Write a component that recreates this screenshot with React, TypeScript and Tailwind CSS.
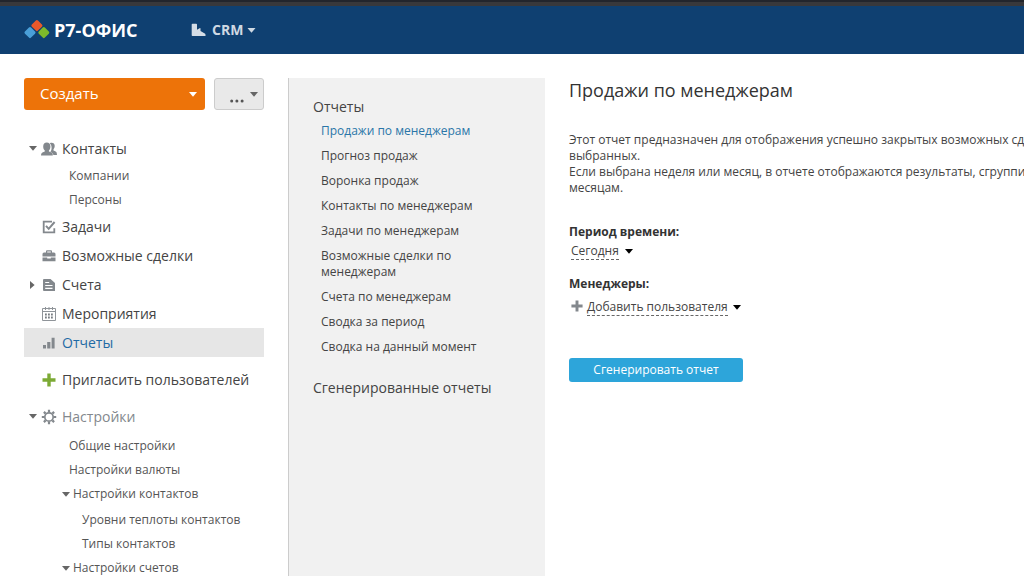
import { useState } from "react";
import type { ReactNode } from "react";

const REPORTS = [
  "Продажи по менеджерам",
  "Прогноз продаж",
  "Воронка продаж",
  "Контакты по менеджерам",
  "Задачи по менеджерам",
  "Возможные сделки по менеджерам",
  "Счета по менеджерам",
  "Сводка за период",
  "Сводка на данный момент",
];

function Caret({ className }: { className?: string }) {
  return (
    <svg viewBox="0 0 8 5" aria-hidden="true" className={className ?? "h-[5px] w-2 fill-[#666]"}>
      <path d="M0 0h8L4 4.8z" />
    </svg>
  );
}

function Logo() {
  return (
    <svg viewBox="0 0 26 20" aria-hidden="true" className="h-5 w-[26px]">
      <rect x="-4.3" y="-4.3" width="8.6" height="8.6" rx="1.5" fill="#4a9fd8" transform="translate(6 12.6) rotate(45)" />
      <rect x="-4.3" y="-4.3" width="8.6" height="8.6" rx="1.5" fill="#7dba2c" transform="translate(19.8 12.6) rotate(45)" />
      <rect x="-4.3" y="-4.3" width="8.6" height="8.6" rx="1.5" fill="#e8582a" transform="translate(12.9 5.600) rotate(45)" />
    </svg>
  );
}

function ContactsIcon() {
  return (
    <svg viewBox="0 0 16 14" aria-hidden="true" className="h-3.5 w-4 fill-[#83888d]">
      <path d="M8.800 1.300c2.600-1.300 4.900.1 4.900 2.500 0 1.700-.5 2.700-1.200 3.400v1.300c1.700.7 2.900 1.100 3.200 2.200l.3 2.300h-3.600c-.3-1.500-1.300-2.400-3-3.100.8-1 1.200-2.500 1.200-4.200 0-1.700-.6-3.300-1.800-4.400z" />
      <path d="M5.800.5c2.200 0 3.600 1.600 3.600 3.900 0 1.900-.6 3.200-1.500 4v1.100c2 .8 3.500 1.200 3.800 2.500l.1 1.500H0l.2-1.500c.3-1.300 1.800-1.700 3.600-2.500V8.400c-1-.8-1.600-2.100-1.600-4C2.200 2.100 3.600.5 5.800.5z" />
    </svg>
  );
}

function TasksIcon() {
  return (
    <svg viewBox="0 0 14 14" aria-hidden="true" className="h-3.5 w-3.5 fill-none stroke-[#83888d]">
      <path d="M10 1.700H1.700v10.600h10.600V8.300" strokeWidth="1.800" />
      <path d="M4 5.800l2.700 3L12.600 2" strokeWidth="2" />
    </svg>
  );
}

function DealsIcon() {
  return (
    <svg viewBox="0 0 14 14" aria-hidden="true" className="h-3.5 w-3.5 fill-[#83888d]">
      <path d="M4 4V2.200Q4 1.200 5 1.200h4q1 0 1 1V4h-1.200V2.400H5.200V4z" />
      <path d="M2 3.500h10q1.500 0 1.500 1.500v2.500h-13V5q0-1.500 1.500-1.500z" />
      <path d="M.5 8.500h4.700v1h3.600v-1h4.700v3.800H.5z" />
    </svg>
  );
}

function InvoicesIcon() {
  return (
    <svg viewBox="0 0 14 14" aria-hidden="true" className="h-3.5 w-3.5">
      <path d="M2 1h6.500L13 5v8H2q-1 0-1-1V2q0-1 1-1z" fill="#83888d" />
      <path d="M3.200 4.500h4M3.200 7.500h7.300M3.200 10.300h7.300" stroke="#fff" strokeWidth="1.200" />
    </svg>
  );
}

function EventsIcon() {
  return (
    <svg viewBox="0 0 16 14" aria-hidden="true" className="h-3.5 w-4">
      <path d="M1.500 1.500h13v12h-13zM1.500 4.500h13" fill="none" stroke="#8f9499" />
      <path d="M4.500 0v3M8 0v3M11.500 0v3" stroke="#8f9499" />
      <path d="M4 7.500h8.500M4 10.500h8.500" stroke="#777c81" strokeWidth="2" strokeDasharray="1.800 1.200" />
    </svg>
  );
}

function ReportsIcon() {
  return (
    <svg viewBox="0 0 14 14" aria-hidden="true" className="h-3.5 w-3.5 fill-[#83888d]">
      <path d="M1 9h3v3.500H1zM5.200 6h3.200v6.500H5.200zM9.600 1.800h3v10.700h-3z" />
    </svg>
  );
}

function PlusIcon({ className }: { className: string }) {
  return (
    <svg viewBox="0 0 14 14" aria-hidden="true" className={className}>
      <path d="M5.300.5h3.400v4.800h4.800v3.400H8.700v4.800H5.300V8.700H.5V5.300h4.800z" />
    </svg>
  );
}

function GearIcon() {
  return (
    <svg viewBox="0 0 16 16" aria-hidden="true" className="h-4 w-4 fill-none stroke-[#83888d]">
      <circle cx="8" cy="8" r="4.200" strokeWidth="1.700" />
      <path
        d="M8 .8v2.400M8 12.800v2.400M.8 8h2.400M12.800 8h2.400M2.900 2.900l1.700 1.700M11.400 11.400l1.700 1.700M2.900 13.100l1.700-1.700M11.400 4.600l1.700-1.700"
        strokeWidth="2.200"
      />
    </svg>
  );
}

type NavItemProps = {
  icon: ReactNode;
  label: string;
  arrow?: "down" | "right";
  active?: boolean;
  muted?: boolean;
};

function NavItem({ icon, label, arrow, active, muted }: NavItemProps) {
  const color = active ? "text-[#1f6aa5]" : muted ? "text-[#83888d]" : "text-[#444]";
  return (
    <a
      href="#"
      aria-current={active ? "page" : undefined}
      className={`flex h-[29px] items-center text-sm ${color} ${active ? "bg-[#e6e6e6]" : ""}`}
    >
      <span className="flex w-[17px] justify-center">
        {arrow === "down" && <Caret />}
        {arrow === "right" && (
          <svg viewBox="0 0 5 8" aria-hidden="true" className="h-2 w-[5px] fill-[#666]">
            <path d="M0 0v8l4.600-4z" />
          </svg>
        )}
      </span>
      <span className="mr-[5px] flex w-4 justify-center">{icon}</span>
      {label}
    </a>
  );
}

function SubItem({ label }: { label: string }) {
  return (
    <a href="#" className="flex h-6 items-center pl-[45px]">
      {label}
    </a>
  );
}

function SubGroup({ label, items }: { label: string; items: string[] }) {
  return (
    <div>
      <a href="#" className="flex h-6 items-center gap-[3px] pl-[38px]">
        <Caret />
        {label}
      </a>
      {items.length > 0 && (
        <div className="pt-0.5">
          {items.map((item) => (
            <a key={item} href="#" className="flex h-6 items-center pl-[58px]">
              {item}
            </a>
          ))}
        </div>
      )}
    </div>
  );
}

function Header() {
  return (
    <header className="shrink-0">
      <div className="h-1.5 border-t-2 border-[#22252c] bg-[#38383b]" />
      <div className="flex h-12 items-center bg-[#0f4071] pl-6">
        <a href="#" className="flex w-[167px] items-center gap-1 text-lg font-bold text-white">
          <Logo />
          Р7-ОФИС
        </a>
        <button type="button" className="flex items-center text-sm font-bold text-[#cfd9e3]">
          <svg viewBox="0 0 15 14" aria-hidden="true" className="mr-1.5 h-3.5 w-[15px] fill-[#d5dde6]">
            <path d="M1.500.8h3.700q.8 0 .8.8v5.200l2.600-1.600q.9-.4.900.5V8l4.300 2.600q.7.4.700 1.100v1.400H1.500q-.8 0-.8-.8V1.600q0-.8.8-.8z" />
          </svg>
          CRM
          <Caret className="ml-1 h-[5px] w-[9px] fill-[#cfd9e3]" />
        </button>
      </div>
    </header>
  );
}

function Sidebar() {
  return (
    <aside className="w-60 shrink-0 pt-6">
      <div className="flex justify-between">
        <button
          type="button"
          className="flex h-8 w-[181px] items-center justify-between rounded-[3px] bg-[#ed7309] pr-2 pb-0.5 pl-4 text-[15px] text-white"
        >
          Создать
          <Caret className="mt-0.5 h-[5px] w-2 fill-white" />
        </button>
        <button
          type="button"
          aria-label="Другие действия"
          className="flex h-8 w-[50px] items-center justify-end gap-1.5 rounded-[3px] border border-[#ccc] bg-[#e9e9e9] pr-[5px]"
        >
          <svg viewBox="0 0 14 14" aria-hidden="true" className="mt-1 h-3.5 w-3.5 fill-[#555]">
            <circle cx="1.700" cy="12" r="1.500" />
            <circle cx="6.900" cy="12" r="1.500" />
            <circle cx="12.100" cy="12" r="1.500" />
          </svg>
          <Caret />
        </button>
      </div>

      <nav className="mt-6 text-xs text-[#555]">
        <NavItem icon={<ContactsIcon />} label="Контакты" arrow="down" />
        <div className="pt-px">
          <SubItem label="Компании" />
          <SubItem label="Персоны" />
        </div>
        <NavItem icon={<TasksIcon />} label="Задачи" />
        <NavItem icon={<DealsIcon />} label="Возможные сделки" />
        <NavItem icon={<InvoicesIcon />} label="Счета" arrow="right" />
        <NavItem icon={<EventsIcon />} label="Мероприятия" />
        <NavItem icon={<ReportsIcon />} label="Отчеты" active />
        <div className="mt-2">
          <NavItem icon={<PlusIcon className="h-3.5 w-3.5 fill-[#7caa35]" />} label="Пригласить пользователей" />
        </div>
        <div className="mt-2">
          <NavItem icon={<GearIcon />} label="Настройки" arrow="down" muted />
          <div className="pt-[3px]">
            <SubItem label="Общие настройки" />
            <SubItem label="Настройки валюты" />
            <SubGroup label="Настройки контактов" items={["Уровни теплоты контактов", "Типы контактов"]} />
            <SubGroup label="Настройки счетов" items={[]} />
          </div>
        </div>
      </nav>
    </aside>
  );
}

type ReportListProps = {
  current: string;
  onSelect: (report: string) => void;
};

function ReportList({ current, onSelect }: ReportListProps) {
  return (
    <section className="mt-6 ml-6 w-[257px] shrink-0 border-l border-[#ccc] bg-[#f1f1f1] pt-[19px] pl-6 text-[#444]">
      <h2 className="text-sm leading-5">Отчеты</h2>
      <ul className="mt-1.5 flex flex-col gap-[9px] pr-16 pl-2 text-xs leading-4">
        {REPORTS.map((report) => (
          <li key={report}>
            <a
              href="#"
              onClick={() => onSelect(report)}
              className={`block ${report === current ? "text-[#2a76a8]" : "text-[#444]"}`}
            >
              {report}
            </a>
          </li>
        ))}
      </ul>
      <h2 className="mt-[23px] text-sm leading-5">
        <a href="#">Сгенерированные отчеты</a>
      </h2>
    </section>
  );
}

function ReportForm({ title }: { title: string }) {
  return (
    <main className="min-w-0 flex-1 overflow-hidden pt-6 pl-6 text-xs leading-4 text-[#444]">
      <h1 className="text-lg leading-6 text-[#333]">{title}</h1>
      <p className="mt-[30px] whitespace-nowrap">
        Этот отчет предназначен для отображения успешно закрытых возможных сд
        <br />
        выбранных.
        <br />
        Если выбрана неделя или месяц, в отчете отображаются результаты, сгруппи
        <br />
        месяцам.
      </p>

      <div className="mt-7">
        <label htmlFor="period" className="block font-bold text-[#333]">
          Период времени:
        </label>
        <div className="mt-[3px] flex items-center gap-1.5 pl-0.5">
          <select id="period" className="appearance-none border-b border-dashed border-[#666]">
            <option>Сегодня</option>
          </select>
          <Caret className="h-[5px] w-2 fill-black" />
        </div>
      </div>

      <div className="mt-4">
        <label htmlFor="add-user" className="block font-bold text-[#333]">
          Менеджеры:
        </label>
        <button id="add-user" type="button" className="mt-[7px] flex items-center pl-0.5">
          <PlusIcon className="mr-1 mb-1 h-3 w-3 fill-[#83888d]" />
          <span className="border-b border-dashed border-[#666]">Добавить пользователя</span>
          <Caret className="ml-[5px] h-[5px] w-2 fill-black" />
        </button>
      </div>

      <button type="button" className="mt-[42px] h-6 w-[174px] rounded-[3px] bg-[#2da5da] text-white">
        Сгенерировать отчет
      </button>
    </main>
  );
}

export default function App() {
  const [report, setReport] = useState(REPORTS[0]);

  return (
    <div className="flex h-screen flex-col overflow-hidden bg-white font-['Open_Sans',sans-serif]">
      <Header />
      <div className="flex min-h-0 flex-1 pl-6">
        <Sidebar />
        <ReportList current={report} onSelect={setReport} />
        <ReportForm title={report} />
      </div>
    </div>
  );
}
